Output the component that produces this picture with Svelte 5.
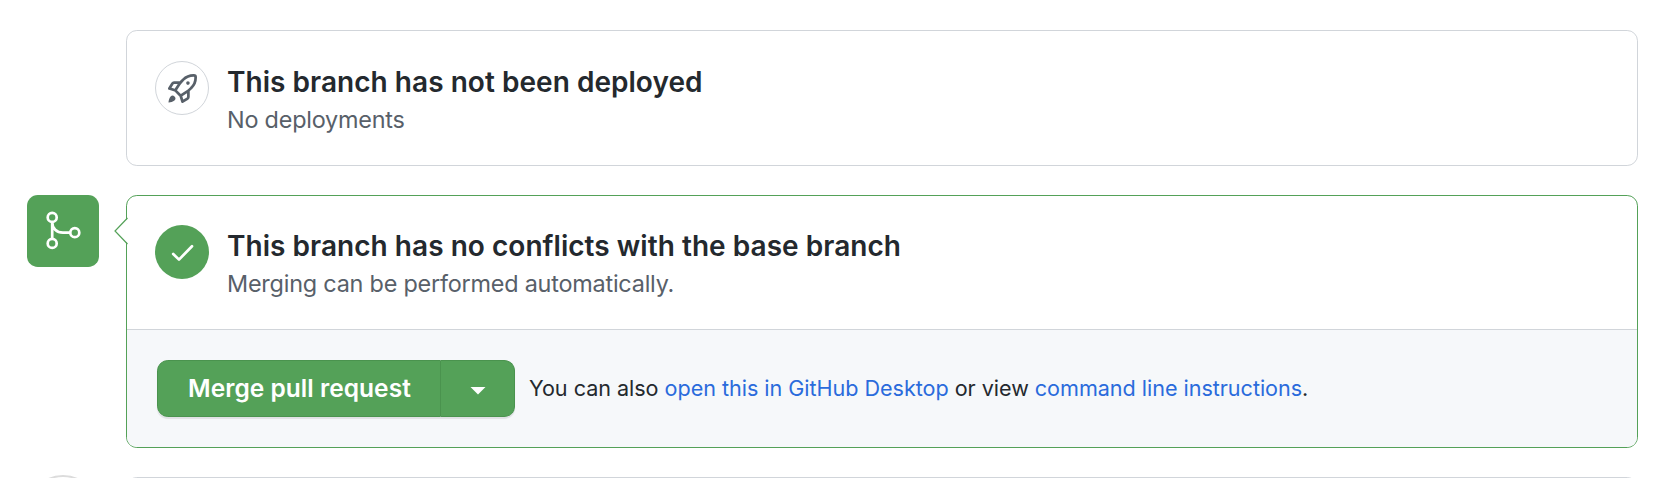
<script>
  const hint = [
    { text: 'You can also ' },
    { text: 'open this in GitHub Desktop', link: true },
    { text: ' or view ' },
    { text: 'command line instructions', link: true },
    { text: '.' }
  ];
</script>

<main class="timeline">
  <section class="card deploy">
    <span class="status outlined">
      <svg width="29" height="29" viewBox="0 0 16 16" fill="currentColor" fill-rule="evenodd" aria-hidden="true">
        <path d="M14.064 0a8.75 8.75 0 00-6.187 2.563l-.459.458c-.314.314-.616.641-.904.979H3.31a1.75 1.75 0 00-1.49.833L.11 7.607a.75.75 0 00.418 1.11l3.102.954c.037.051.079.1.124.145l2.429 2.428c.046.046.094.088.145.125l.954 3.102a.75.75 0 001.11.418l2.774-1.707a1.75 1.75 0 00.833-1.49V9.485c.338-.288.665-.59.979-.904l.458-.459A8.75 8.75 0 0016 1.936V1.75A1.75 1.75 0 0014.25 0h-.186zM10.5 10.625c-.088.06-.177.118-.266.175l-2.35 1.521.548 1.783 1.949-1.2a.25.25 0 00.119-.213v-2.066zM3.678 8.116L5.2 5.766c.058-.09.117-.178.176-.266H3.309a.25.25 0 00-.213.119l-1.2 1.95 1.782.547zm5.26-4.493A7.25 7.25 0 0114.063 1.5h.186a.25.25 0 01.25.25v.186a7.25 7.25 0 01-2.123 5.127l-.459.458a15.21 15.21 0 01-2.499 2.02l-2.317 1.5-2.143-2.143 1.5-2.317a15.25 15.25 0 012.02-2.5l.458-.458h.002zM12 5a1 1 0 11-2 0 1 1 0 012 0zm-8.44 9.56a1.5 1.5 0 10-2.12-2.12c-.734.73-1.047 2.332-1.15 3.003a.23.23 0 00.265.265c.671-.103 2.273-.416 3.005-1.148z" />
      </svg>
    </span>
    <div class="copy">
      <h3>This branch has not been deployed</h3>
      <p>No deployments</p>
    </div>
  </section>

  <div class="badge">
    <svg width="72" height="72" viewBox="0 0 72 72" fill="none" stroke="#fff" stroke-width="2.7" aria-hidden="true">
      <circle cx="25.2" cy="22.4" r="4.5" />
      <circle cx="25.2" cy="48.4" r="4.5" />
      <circle cx="47.8" cy="37.7" r="4.5" />
      <path d="M25.2 27v17M25.2 27c0 6.500 4.500 10.700 10.700 10.700h7.400" />
    </svg>
  </div>
  <section class="card merge">
    <svg class="caret" width="14" height="28" viewBox="0 0 14 28" aria-hidden="true">
      <path d="M14 1L1 14l13 13z" fill="#fff" />
      <path d="M13.500 1L1 14l12.500 13" fill="none" stroke="#54a158" stroke-width="1.200" />
    </svg>
    <div class="info">
      <span class="status filled">
        <svg width="54" height="54" viewBox="0 0 54 54" fill="none" stroke="#fff" stroke-width="2.700" stroke-linecap="round" stroke-linejoin="round" aria-hidden="true">
          <path d="M18.200 29L24 34.600 37 21.300" />
        </svg>
      </span>
      <div class="copy">
        <h3>This branch has no conflicts with the base branch</h3>
        <p>Merging can be performed automatically.</p>
      </div>
    </div>
    <div class="actions">
      <div class="group">
        <button class="main"><span>Merge pull request</span></button>
        <button class="more" aria-label="Select merge method">
          <svg width="16" height="8" viewBox="0 0 16 8" aria-hidden="true"><path d="M.5 0h15L8 7.500z" fill="#fff" /></svg>
        </button>
      </div>
      <p class="hint">{#each hint as part}{#if part.link}<a href="#top">{part.text}</a>{:else}{part.text}{/if}{/each}</p>
    </div>
  </section>

  <div class="avatar"></div>
  <section class="card next"></section>
</main>

<style>
  :global(body) {
    background: #fff;
    overflow: hidden;
  }
  .timeline {
    box-sizing: border-box;
    width: 1664px;
    height: 478px;
    overflow: hidden;
    padding: 30px 26px 0 27px;
    display: grid;
    grid-template-columns: 72px 1512px;
    grid-template-rows: 136px 253px 60px;
    column-gap: 27px;
    row-gap: 29px;
    font-family: Inter, "Liberation Sans", sans-serif;
    color: #24292e;
  }
  .card {
    box-sizing: border-box;
    grid-column: 2;
    border: 1px solid #d1d5da;
    border-radius: 10.800px;
    background: #fff;
  }
  .deploy, .info {
    display: flex;
    gap: 18px;
    padding: 30px 28px 0;
  }
  .merge {
    position: relative;
    border-color: #54a158;
    display: flex;
    flex-direction: column;
  }
  .caret {
    position: absolute;
    left: -13px;
    top: 21px;
  }
  .info {
    box-sizing: border-box;
    height: 133px;
    padding-top: 29px;
  }
  .status {
    box-sizing: border-box;
    flex: none;
    width: 54px;
    height: 54px;
    border-radius: 50%;
    display: flex;
    align-items: center;
    justify-content: center;
  }
  .outlined {
    border: 1px solid #d1d5da;
    color: #586069;
  }
  .filled, .badge {
    background: #54a158;
  }
  .badge {
    width: 72px;
    height: 72px;
    border-radius: 10.800px;
  }
  .badge svg, .status svg {
    display: block;
  }
  .copy {
    padding-top: 1px;
  }
  h3, p {
    margin: 0;
    white-space: nowrap;
  }
  h3 {
    font-size: 28px;
    line-height: 40px;
    font-weight: 600;
    letter-spacing: 0.036px;
  }
  .copy p {
    font-size: 23.400px;
    line-height: 36px;
    letter-spacing: -0.210px;
    color: #586069;
  }
  .actions {
    flex: 1;
    display: flex;
    align-items: flex-start;
    padding: 30px 30px 0;
    border-top: 1px solid #d1d5da;
    border-radius: 0 0 9.800px 9.800px;
    background: #f6f8fa;
  }
  .group {
    display: flex;
    height: 57px;
    border-radius: 10.800px;
    box-shadow: 0 2px 1px rgba(27, 31, 35, 0.1);
  }
  button {
    box-sizing: border-box;
    height: 57px;
    margin: 0;
    padding: 0;
    border: 1px solid #4a934e;
    background: #54a158;
    color: #fff;
    font: 600 24.500px/52px Inter, "Liberation Sans", sans-serif;
    letter-spacing: 0.040px;
    white-space: nowrap;
  }
  .main {
    width: 284px;
    padding: 0 0 2px 30px;
    text-align: left;
    border-radius: 10.800px 0 0 10.800px;
  }
  .more {
    width: 74px;
    border-left: 0;
    border-radius: 0 10.800px 10.800px 0;
    display: flex;
    align-items: center;
    justify-content: center;
    padding-top: 4px;
  }
  .hint {
    padding-left: 14px;
    font-size: 21.600px;
    line-height: 56px;
    letter-spacing: -0.040px;
  }
  a {
    color: #2a6bdc;
    text-decoration: none;
  }
  .avatar {
    box-sizing: border-box;
    width: 72px;
    height: 72px;
    margin-top: -2px;
    border: 2px solid #dcdcdc;
    border-radius: 50%;
  }
</style>
